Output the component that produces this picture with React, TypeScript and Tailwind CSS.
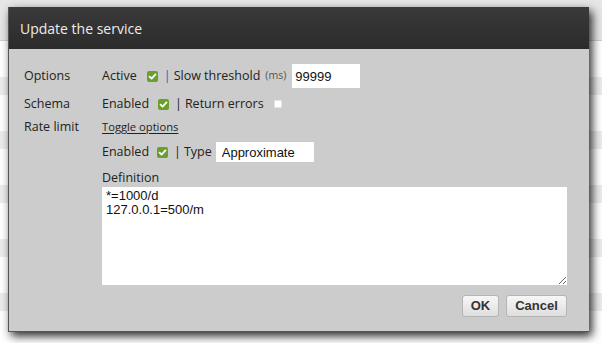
import React from "react";

const font = { fontFamily: '"Open Sans", "Liberation Sans", sans-serif' };
const arial = { fontFamily: '"Liberation Sans", Arial, sans-serif' };

const Checked = () => (
  <svg width="11" height="11" viewBox="0 0 11 11" className="block shrink-0">
    <rect x="0" y="0" width="11" height="11" rx="2" fill="#6a9f2c" />
    <path d="M2.6 5.6 L4.6 7.6 L8.5 3.4" stroke="#fff" strokeWidth="1.8" fill="none" strokeLinecap="round" strokeLinejoin="round" />
  </svg>
);

const Unchecked = () => <span className="block w-2 h-2 bg-white border border-[#e4e4e4] shrink-0" />;

const rows = Array.from({ length: 12 });

export default function App() {
  return (
    <div className="relative w-[602px] h-[343px] overflow-hidden bg-white" style={font}>
      {/* page behind the dialog */}
      <div className="flex flex-col">
        <div className="h-[41px] bg-[#e6e6e6] border-b border-[#cfcfcf]" />
        {rows.map((_, i) => (
          <div key={i} className="flex flex-col">
            <div className="h-[36px] bg-white" />
            <div className="h-[18px] bg-[#ececec]" />
          </div>
        ))}
      </div>

      {/* dialog */}
      <div className="absolute left-[8px] top-[7px] w-[581px] h-[325px] bg-[#cccccc] border-l border-b border-[#555] shadow-[3px_4px_9px_rgba(0,0,0,0.85)] flex flex-col">
        <div className="h-[42px] shrink-0 bg-gradient-to-b from-[#3a3a3a] to-[#2b2b2b] flex items-center pl-[11px] text-[14px] text-[#ececec]">
          Update the service
        </div>

        <div className="flex flex-col pt-[15px] pl-[15px] pr-[22px] text-[12.5px] text-[#222]">
          <div className="flex items-center h-6">
            <div className="w-[78px]">Options</div>
            <span>Active</span>
            <span className="ml-[10px]"><Checked /></span>
            <span className="ml-[6px] text-[#2f5cb8]">|</span>
            <span className="ml-[3px]">Slow threshold</span>
            <span className="ml-[5px] text-[10.5px] text-[#555]">(ms)</span>
            <input
              readOnly
              defaultValue="99999"
              className="ml-[6px] w-[68px] h-6 bg-white px-[3px] text-[13px] text-[#111] outline-none"
              style={arial}
            />
          </div>

          <div className="flex items-center h-5 mt-[6px]">
            <div className="w-[78px]">Schema</div>
            <span>Enabled</span>
            <span className="ml-[9px]"><Checked /></span>
            <span className="ml-[6px]">|</span>
            <span className="ml-[3px]">Return errors</span>
            <span className="ml-[10px]"><Unchecked /></span>
          </div>

          <div className="flex items-center h-[18px] mt-[4px]">
            <div className="w-[78px]">Rate limit</div>
            <a className="text-[11.2px] underline underline-offset-2 text-[#222]">Toggle options</a>
          </div>

          <div className="flex items-center h-5 mt-[6px] pl-[78px]">
            <span>Enabled</span>
            <span className="ml-[8px]"><Checked /></span>
            <span className="ml-[6px]">|</span>
            <span className="ml-[3px]">Type</span>
            <input
              readOnly
              defaultValue="Approximate"
              className="ml-[4px] w-[98px] h-5 bg-white px-[6px] text-[13px] text-[#111] outline-none"
              style={arial}
            />
          </div>

          <div className="flex items-center h-4 mt-[8px] pl-[78px]">Definition</div>

          <div className="pl-[78px] mt-px">
            <textarea
              readOnly
              defaultValue={"*=1000/d\n127.0.0.1=500/m"}
              className="block w-[465px] h-[98px] bg-white px-[4px] py-[2px] text-[13px] leading-[14px] text-[#111] outline-none resize"
              style={arial}
            />
          </div>

          <div className="flex justify-end gap-[7px] mt-[10px]" style={arial}>
            <button className="h-[22px] w-[37px] rounded-[3px] border border-[#b5b5b5] bg-gradient-to-b from-[#f7f7f7] to-[#dedede] text-[13px] font-bold text-[#333]">
              OK
            </button>
            <button className="h-[22px] w-[61px] rounded-[3px] border border-[#b5b5b5] bg-gradient-to-b from-[#f7f7f7] to-[#dedede] text-[13px] font-bold text-[#333]">
              Cancel
            </button>
          </div>
        </div>
      </div>
    </div>
  );
}
